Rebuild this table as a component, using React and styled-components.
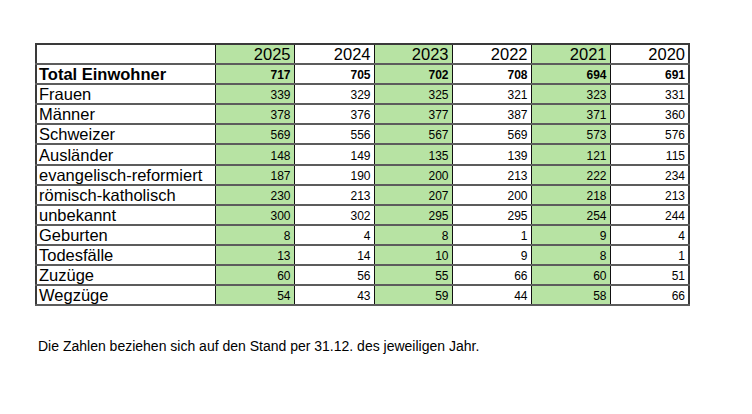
import React from "react";
import styled, { createGlobalStyle } from "styled-components";

const Global = createGlobalStyle`
  html, body { margin: 0; padding: 0; background: #fff; }
  body { font-family: "Liberation Sans", Arial, sans-serif; color: #000; }
`;

const Page = styled.div`
  width: 752px;
  height: 414px;
  padding: 43px 0 0 35px;
  box-sizing: border-box;
`;

const Table = styled.table`
  border-collapse: collapse;
  table-layout: fixed;
  width: 653px;
  border: 2px solid #3a3a3a;
`;

const Row = styled.tr`
  height: 20.1px;
  border-bottom: 2px solid #5c5c5c;
`;

const Cell = styled.td`
  padding: 0 3px 0 0;
  text-align: right;
  vertical-align: bottom;
  font-size: ${(p) => (p.$head ? "16.5px" : "12px")};
  font-weight: ${(p) => (p.$bold ? 700 : 400)};
  line-height: ${(p) => (p.$head ? "18px" : "15px")};
  background: ${(p) => (p.$green ? "#b7e3a3" : "#fff")};
  border-right: 1px solid #111;
  white-space: nowrap;
  overflow: hidden;
`;

const LabelCell = styled.td`
  padding: 0 0 0 2px;
  text-align: left;
  vertical-align: bottom;
  font-size: 16.5px;
  line-height: 18px;
  font-weight: ${(p) => (p.$bold ? 700 : 400)};
  border-right: 1px solid #111;
  white-space: nowrap;
  overflow: hidden;
`;

const Note = styled.p`
  margin: 32px 0 0 3px;
  font-size: 14px;
  line-height: 17px;
`;

const years = [2025, 2024, 2023, 2022, 2021, 2020];
const widths = [179, 79, 80, 78, 79, 79, 79];

const rows = [
  ["Total Einwohner", [717, 705, 702, 708, 694, 691], true],
  ["Frauen", [339, 329, 325, 321, 323, 331]],
  ["Männer", [378, 376, 377, 387, 371, 360]],
  ["Schweizer", [569, 556, 567, 569, 573, 576]],
  ["Ausländer", [148, 149, 135, 139, 121, 115]],
  ["evangelisch-reformiert", [187, 190, 200, 213, 222, 234]],
  ["römisch-katholisch", [230, 213, 207, 200, 218, 213]],
  ["unbekannt", [300, 302, 295, 295, 254, 244]],
  ["Geburten", [8, 4, 8, 1, 9, 4]],
  ["Todesfälle", [13, 14, 10, 9, 8, 1]],
  ["Zuzüge", [60, 56, 55, 66, 60, 51]],
  ["Wegzüge", [54, 43, 59, 44, 58, 66]],
];

export default function App() {
  return (
    <>
      <Global />
      <Page>
        <Table>
          <colgroup>
            {widths.map((w, i) => (
              <col key={i} style={{ width: w }} />
            ))}
          </colgroup>
          <thead>
            <Row>
              <LabelCell />
              {years.map((y, i) => (
                <Cell key={y} $head $green={i % 2 === 0}>
                  {y}
                </Cell>
              ))}
            </Row>
          </thead>
          <tbody>
            {rows.map(([label, vals, bold]) => (
              <Row key={label}>
                <LabelCell $bold={bold}>{label}</LabelCell>
                {vals.map((v, i) => (
                  <Cell key={i} $bold={bold} $green={i % 2 === 0}>
                    {v}
                  </Cell>
                ))}
              </Row>
            ))}
          </tbody>
        </Table>
        <Note>Die Zahlen beziehen sich auf den Stand per 31.12. des jeweiligen Jahr.</Note>
      </Page>
    </>
  );
}
